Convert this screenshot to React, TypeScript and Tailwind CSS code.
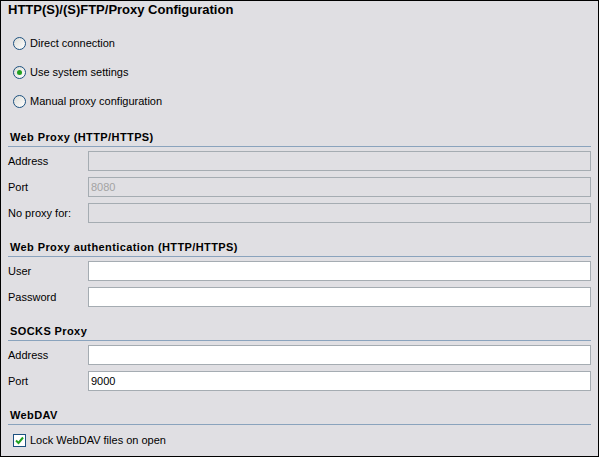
import React from 'react';

const Radio = ({ checked, label }: { checked?: boolean; label: string }) => (
  <div className="flex h-[20px] items-center gap-[4px] pl-[5px]">
    <span className="flex h-[13px] w-[13px] items-center justify-center rounded-full border border-[#1c5180] bg-gradient-to-br from-[#dcdcd7] to-white">
      {checked && <span className="h-[5px] w-[5px] rounded-full bg-[#21a121]" />}
    </span>
    <span>{label}</span>
  </div>
);

const Header = ({ title, first }: { title: string; first?: boolean }) => (
  <div
    className={`flex h-[19px] items-center border-b border-[#8aa3bd] pl-[2px] font-bold tracking-[0.4px] ${
      first ? 'mt-[17px]' : 'mt-[15px]'
    }`}
  >
    {title}
  </div>
);

const Field = ({ label, value, disabled }: { label: string; value?: string; disabled?: boolean }) => (
  <div className="flex h-[20px] items-center">
    <span className="w-[80px] shrink-0">{label}</span>
    <div
      className={`flex h-[20px] flex-1 items-center border border-[#a5acb2] px-[2px] ${
        disabled ? 'bg-[#e0dfe3] text-[#a3a3a3]' : 'bg-white text-black'
      }`}
    >
      {value}
    </div>
  </div>
);

export default function App() {
  return (
    <div
      className="h-[457px] w-[599px] border border-black bg-[#e0dfe3] px-[7px] text-[11px] text-black"
      style={{ fontFamily: '"Liberation Sans", Arial, sans-serif' }}
    >
      <div className="h-[18px] text-[13px] font-bold leading-[18px]">HTTP(S)/(S)FTP/Proxy Configuration</div>

      <div className="mt-[14px] flex flex-col gap-[9px]">
        <Radio label="Direct connection" />
        <Radio label="Use system settings" checked />
        <Radio label="Manual proxy configuration" />
      </div>

      <Header title="Web Proxy (HTTP/HTTPS)" first />
      <div className="mt-[4px] flex flex-col gap-[6px]">
        <Field label="Address" disabled />
        <Field label="Port" value="8080" disabled />
        <Field label="No proxy for:" disabled />
      </div>

      <Header title="Web Proxy authentication (HTTP/HTTPS)" />
      <div className="mt-[4px] flex flex-col gap-[6px]">
        <Field label="User" />
        <Field label="Password" />
      </div>

      <Header title="SOCKS Proxy" />
      <div className="mt-[4px] flex flex-col gap-[6px]">
        <Field label="Address" />
        <Field label="Port" value="9000" />
      </div>

      <Header title="WebDAV" />
      <div className="mt-[5px] flex h-[20px] items-center gap-[4px] pl-[5px]">
        <span className="flex h-[13px] w-[13px] items-center justify-center border border-[#1c5180] bg-white">
          <svg width="9" height="9" viewBox="0 0 9 9">
            <path d="M1 4.5 L3.5 7 L8 1.5" fill="none" stroke="#21a121" strokeWidth="2" />
          </svg>
        </span>
        <span>Lock WebDAV files on open</span>
      </div>
    </div>
  );
}
